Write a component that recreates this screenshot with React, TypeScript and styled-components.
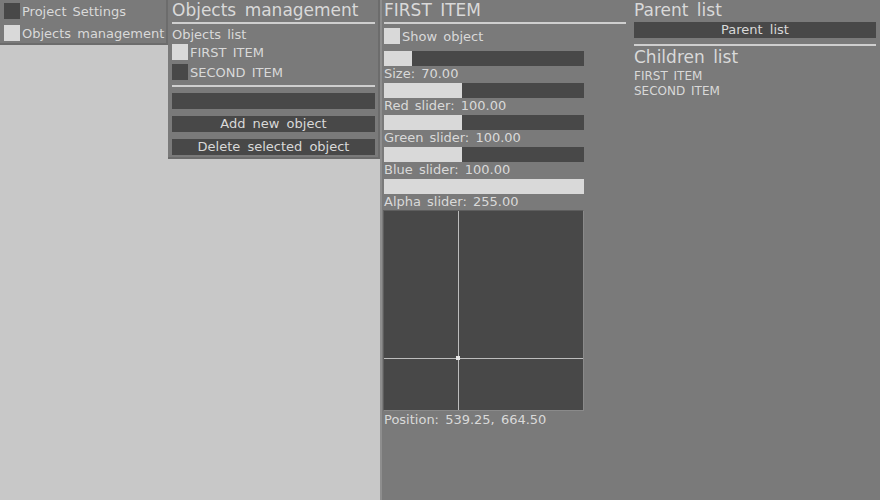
import React from "react";
import styled, { createGlobalStyle } from "styled-components";

const Global = createGlobalStyle`
  html, body { margin: 0; padding: 0; background: #c8c8c8; }
  body { font-family: "DejaVu Sans", "Liberation Sans", sans-serif; font-size: 13px; color: #d9d9d9; }
  * { box-sizing: border-box; }
`;

const Root = styled.div`
  display: flex;
  width: 880px;
  height: 500px;
  overflow: hidden;
`;

const LeftArea = styled.div`
  width: 380px;
  display: flex;
  align-items: flex-start;
`;

const Panel = styled.div<{ $w: number }>`
  width: ${(p) => p.$w}px;
  background: #7a7a7a;
  border-right: 2px solid #6c6c6c;
  border-bottom: 2px solid #6c6c6c;
  display: flex;
  flex-direction: column;
`;

const MenuPanel = styled(Panel)`
  padding: 3px 0 2px 4px;
  gap: 6px;
`;

const ObjPanel = styled(Panel)`
  padding: 0 3px 2px 4px;
`;

const Row = styled.div`
  display: flex;
  align-items: center;
  gap: 2px;
  height: 16px;
  word-spacing: 2px;
  white-space: nowrap;
`;

const Box = styled.div<{ $on: boolean }>`
  width: 16px;
  height: 16px;
  flex: none;
  background: ${(p) => (p.$on ? "#d9d9d9" : "#484848")};
`;

const Heading = styled.div`
  font-size: 17px;
  line-height: 21px;
  height: 22px;
  word-spacing: 3px;
  white-space: nowrap;
`;

const Sep = styled.div<{ $mt?: number; $mb?: number }>`
  height: 2px;
  background: #cfcfcf;
  margin-top: ${(p) => p.$mt ?? 0}px;
  margin-bottom: ${(p) => p.$mb ?? 0}px;
`;

const Label = styled.div<{ $mt?: number }>`
  line-height: 16px;
  height: 16px;
  margin-top: ${(p) => p.$mt ?? 0}px;
  word-spacing: 2px;
  white-space: nowrap;
`;

const DarkBar = styled.div`
  height: 16px;
  background: #484848;
  text-align: center;
  line-height: 16px;
  word-spacing: 3px;
  white-space: nowrap;
`;

const ListRows = styled.div`
  display: flex;
  flex-direction: column;
  gap: 4px;
  margin-top: 1px;
`;

const Buttons = styled.div`
  display: flex;
  flex-direction: column;
  gap: 7px;
  margin-top: 6px;
`;

const Main = styled.div`
  flex: 1;
  background: #7a7a7a;
  border-left: 2px solid #8e8e8e;
  display: flex;
  padding: 0 4px 0 2px;
  gap: 8px;
`;

const Column = styled.div<{ $w: number }>`
  width: ${(p) => p.$w}px;
  display: flex;
  flex-direction: column;
`;

const SliderBlock = styled.div`
  display: flex;
  flex-direction: column;
  margin-top: 7px;
`;

const Track = styled.div`
  width: 200px;
  height: 15px;
  background: #484848;
  display: flex;
`;

const Fill = styled.div`
  height: 100%;
  background: #d9d9d9;
`;

const SliderLabel = styled.div`
  height: 17px;
  line-height: 15px;
  word-spacing: 2px;
  white-space: nowrap;
`;

const Pad = styled.div`
  position: relative;
  width: 201px;
  height: 201px;
  margin-left: -1px;
  margin-top: -1px;
  background: #484848;
  border: 1px solid #5e5e5e;
  border-bottom-color: #8a8a8a;
  border-right-color: #8a8a8a;
`;

const VLine = styled.div`
  position: absolute;
  top: 0;
  bottom: 0;
  width: 1px;
  background: #bdbdbd;
`;

const HLine = styled.div`
  position: absolute;
  left: 0;
  right: 0;
  height: 1px;
  background: #bdbdbd;
`;

const Knob = styled.div`
  position: absolute;
  width: 4px;
  height: 4px;
  background: #e6e6e6;
`;

const SmallText = styled.div`
  font-size: 12px;
  line-height: 15px;
  word-spacing: 2px;
  white-space: nowrap;
`;

const sliders = [
  { label: "Size: 70.00", fill: 28 },
  { label: "Red slider: 100.00", fill: 78 },
  { label: "Green slider: 100.00", fill: 78 },
  { label: "Blue slider: 100.00", fill: 78 },
  { label: "Alpha slider: 255.00", fill: 200 },
];

export default function App() {
  const px = 74;
  const py = 147;
  return (
    <>
      <Global />
      <Root>
        <LeftArea>
          <MenuPanel $w={168}>
            <Row>
              <Box $on={false} />
              Project Settings
            </Row>
            <Row>
              <Box $on={true} />
              Objects management
            </Row>
          </MenuPanel>
          <ObjPanel $w={212}>
            <Heading>Objects management</Heading>
            <Sep $mb={3} />
            <Label>Objects list</Label>
            <ListRows>
              <Row>
                <Box $on={true} />
                FIRST ITEM
              </Row>
              <Row>
                <Box $on={false} />
                SECOND ITEM
              </Row>
            </ListRows>
            <Sep $mt={5} />
            <Buttons>
              <DarkBar />
              <DarkBar>Add new object</DarkBar>
              <DarkBar>Delete selected object</DarkBar>
            </Buttons>
          </ObjPanel>
        </LeftArea>
        <Main>
          <Column $w={242}>
            <Heading>FIRST ITEM</Heading>
            <Sep $mb={4} />
            <Row>
              <Box $on={true} />
              Show object
            </Row>
            <SliderBlock>
              {sliders.map((s) => (
                <React.Fragment key={s.label}>
                  <Track>
                    <Fill style={{ width: s.fill }} />
                  </Track>
                  <SliderLabel>{s.label}</SliderLabel>
                </React.Fragment>
              ))}
            </SliderBlock>
            <Pad>
              <VLine style={{ left: px }} />
              <HLine style={{ top: py }} />
              <Knob style={{ left: px - 2, top: py - 2 }} />
            </Pad>
            <Label $mt={1}>Position: 539.25, 664.50</Label>
          </Column>
          <Column $w={242}>
            <Heading>Parent list</Heading>
            <DarkBar>Parent list</DarkBar>
            <Sep $mt={6} $mb={1} />
            <Heading>Children list</Heading>
            <SmallText>FIRST ITEM</SmallText>
            <SmallText>SECOND ITEM</SmallText>
          </Column>
        </Main>
      </Root>
    </>
  );
}
